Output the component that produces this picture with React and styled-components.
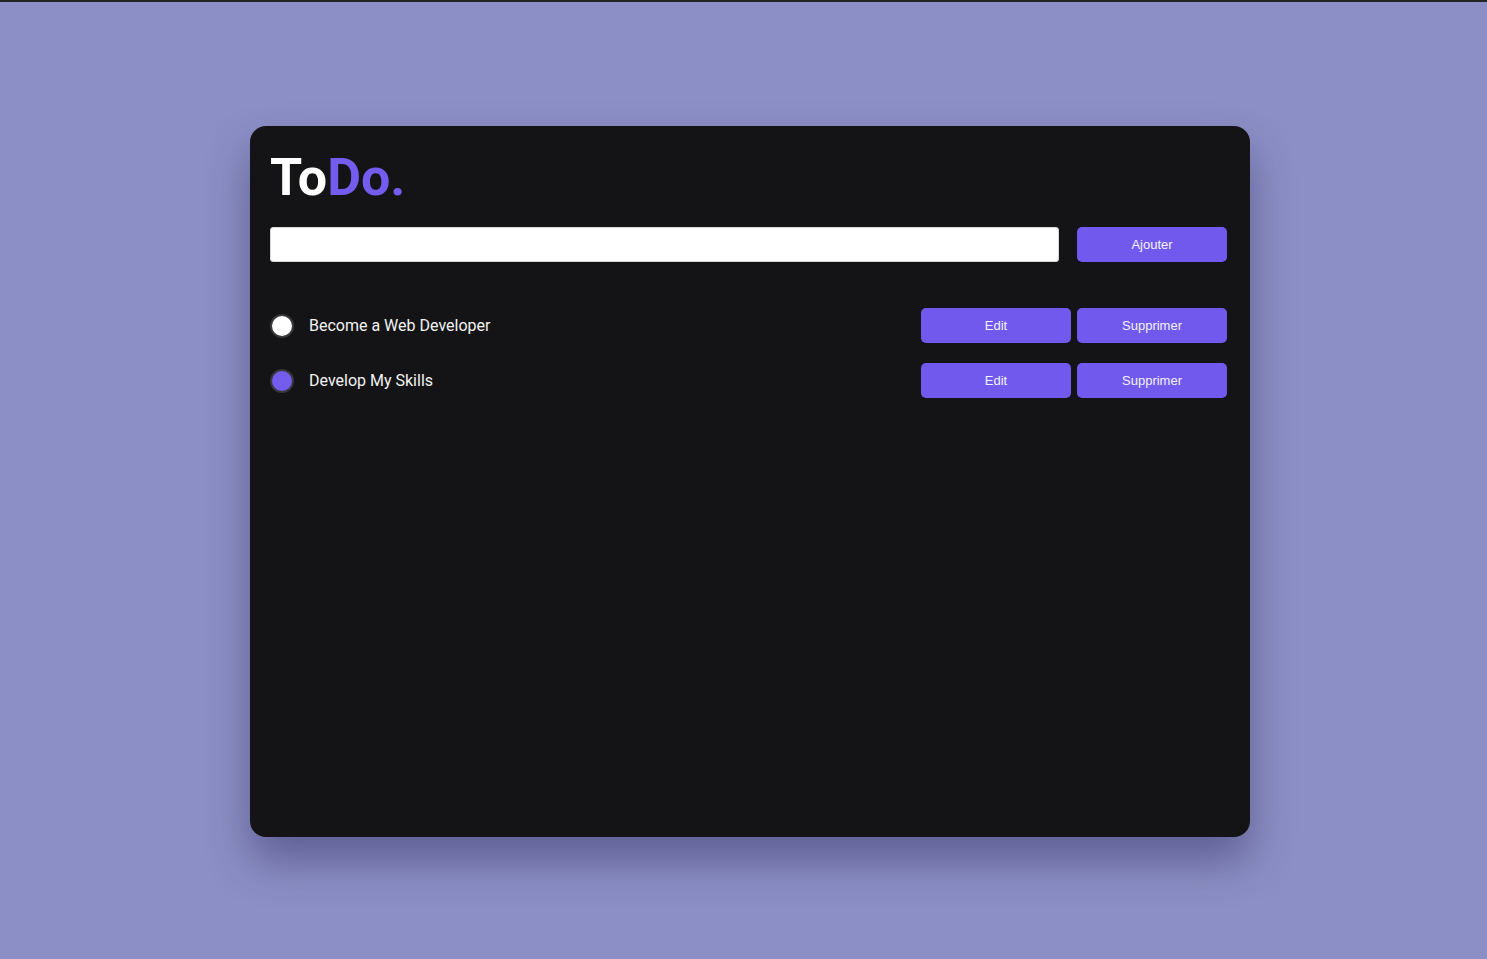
import React from "react";
import styled, { createGlobalStyle } from "styled-components";

const GlobalStyle = createGlobalStyle`
  * { box-sizing: border-box; }
  html, body { margin: 0; padding: 0; }
  body {
    background: #8c8fc5;
    border-top: 2px solid #232326;
    font-family: Roboto, "Liberation Sans", sans-serif;
  }
`;

const Page = styled.div`
  display: flex;
  align-items: center;
  justify-content: center;
  min-height: calc(100vh - 2px);
  padding: 2px 0 0 13px;
`;

const Card = styled.div`
  width: 1000px;
  height: 711px;
  background: #141416;
  border-radius: 16px;
  padding: 26px 23px 20px 20px;
  box-shadow: 0 24px 44px rgba(40, 40, 90, 0.45);
`;

const Title = styled.h1`
  margin: 0 0 23px;
  font-family: Roboto, sans-serif;
  font-size: 52px;
  font-weight: 700;
  line-height: 1;
  color: #ffffff;
`;

const Accent = styled.span`
  color: #735cee;
`;

const Form = styled.form`
  display: flex;
  gap: 18px;
  margin-bottom: 46px;
`;

const Input = styled.input`
  flex: 1;
  height: 35px;
  border: 1px solid #d8d8d8;
  border-radius: 3px;
  background: #ffffff;
  padding: 0 10px;
  outline: none;
`;

const Button = styled.button`
  width: 150px;
  height: 35px;
  border: none;
  border-radius: 5px;
  background: #7159ee;
  color: #f4f2ff;
  font-family: "Liberation Sans", Arial, sans-serif;
  font-size: 13px;
  cursor: pointer;
`;

const List = styled.ul`
  list-style: none;
  margin: 0;
  padding: 0;
  display: flex;
  flex-direction: column;
  gap: 20px;
`;

const Row = styled.li`
  display: flex;
  align-items: center;
  height: 35px;
`;

const Check = styled.span`
  width: 24px;
  height: 24px;
  border-radius: 50%;
  border: 2px solid #38383c;
  background: ${(p) => (p.$done ? "#735cee" : "#ffffff")};
  margin-right: 15px;
  flex-shrink: 0;
`;

const Label = styled.span`
  flex: 1;
  color: #f2f2f2;
  font-size: 16px;
`;

const Actions = styled.div`
  display: flex;
  gap: 6px;
`;

const todos = [
  { text: "Become a Web Developer", done: false },
  { text: "Develop My Skills", done: true },
];

export default function App() {
  return (
    <>
      <GlobalStyle />
      <Page>
        <Card>
          <Title>
            To<Accent>Do.</Accent>
          </Title>
          <Form onSubmit={(e) => e.preventDefault()}>
            <Input type="text" />
            <Button type="submit">Ajouter</Button>
          </Form>
          <List>
            {todos.map((t) => (
              <Row key={t.text}>
                <Check $done={t.done} />
                <Label>{t.text}</Label>
                <Actions>
                  <Button>Edit</Button>
                  <Button>Supprimer</Button>
                </Actions>
              </Row>
            ))}
          </List>
        </Card>
      </Page>
    </>
  );
}
